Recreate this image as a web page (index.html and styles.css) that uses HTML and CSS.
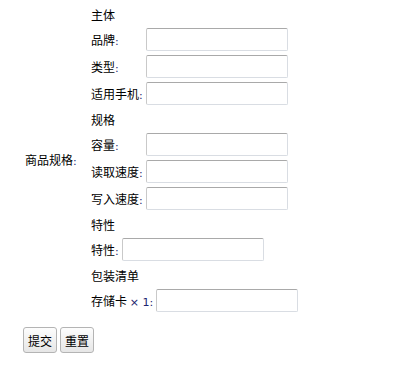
FILE: index.html
```html
<!DOCTYPE html>
<html lang="zh-CN">
<head>
<meta charset="utf-8">
<title>商品规格</title>
<link rel="stylesheet" href="styles.css">
</head>
<body>
<form class="form">
  <div class="spec-row">
    <div class="spec-label">商品规格<span class="colon">:</span></div>
    <div class="groups">
      <div class="group">
        <div class="group-title">主体</div>
        <div class="fields">
          <label class="field-label">品牌<span class="colon">:</span></label><input class="field-input" type="text">
          <label class="field-label">类型<span class="colon">:</span></label><input class="field-input" type="text">
          <label class="field-label">适用手机<span class="colon">:</span></label><input class="field-input" type="text">
        </div>
      </div>
      <div class="group">
        <div class="group-title">规格</div>
        <div class="fields">
          <label class="field-label">容量<span class="colon">:</span></label><input class="field-input" type="text">
          <label class="field-label">读取速度<span class="colon">:</span></label><input class="field-input" type="text">
          <label class="field-label">写入速度<span class="colon">:</span></label><input class="field-input" type="text">
        </div>
      </div>
      <div class="group">
        <div class="group-title">特性</div>
        <div class="fields">
          <label class="field-label">特性<span class="colon">:</span></label><input class="field-input" type="text">
        </div>
      </div>
      <div class="group">
        <div class="group-title">包装清单</div>
        <div class="fields">
          <label class="field-label">存储卡 <span class="latin">× 1</span><span class="colon">:</span></label><input class="field-input" type="text">
        </div>
      </div>
    </div>
  </div>
  <div class="actions">
    <button class="btn" type="submit">提交</button>
    <button class="btn" type="reset">重置</button>
  </div>
</form>
</body>
</html>
```
FILE: styles.css
```css
html, body {
  margin: 0;
  padding: 0;
  background: #ffffff;
}

body {
  font-family: "Noto Sans CJK SC", "Noto Sans", sans-serif;
  font-size: 12px;
  color: #000000;
}

.form {
  padding: 7px 0 0 8px;
}

.spec-row {
  display: flex;
  align-items: center;
}

.spec-label {
  margin-left: 17px;
  width: 66px;
  white-space: nowrap;
}

.colon, .latin {
  font-family: "DejaVu Sans", sans-serif;
  font-size: 11px;
  line-height: 1;
  color: #1c2470;
}

.groups {
  display: flex;
  flex-direction: column;
  gap: 7px;
}

.group {
  display: flex;
  flex-direction: column;
}

.group-title {
  line-height: 16px;
  height: 16px;
  margin-bottom: 5px;
}

.fields {
  display: grid;
  grid-template-columns: auto 142px;
  justify-content: start;
  column-gap: 3px;
  row-gap: 4px;
  align-items: center;
}

.field-label {
  white-space: nowrap;
  height: 23px;
  line-height: 23px;
}

.field-input {
  box-sizing: border-box;
  width: 142px;
  height: 23px;
  margin: 0;
  padding: 1px 3px;
  font: inherit;
  background: #ffffff;
  border: 1px solid #d9dde3;
  border-top-color: #a9a9a9;
  border-left-color: #c9c9c9;
  border-radius: 2px;
}

.actions {
  display: flex;
  gap: 3px;
  margin: 15px 0 0 15px;
}

.btn {
  box-sizing: border-box;
  height: 26px;
  padding: 0 4px;
  margin: 0;
  font: inherit;
  color: #000000;
  background: linear-gradient(#fdfdfd, #e6e6e6);
  border: 1px solid #b4b4b4;
  border-radius: 3px;
}
```
